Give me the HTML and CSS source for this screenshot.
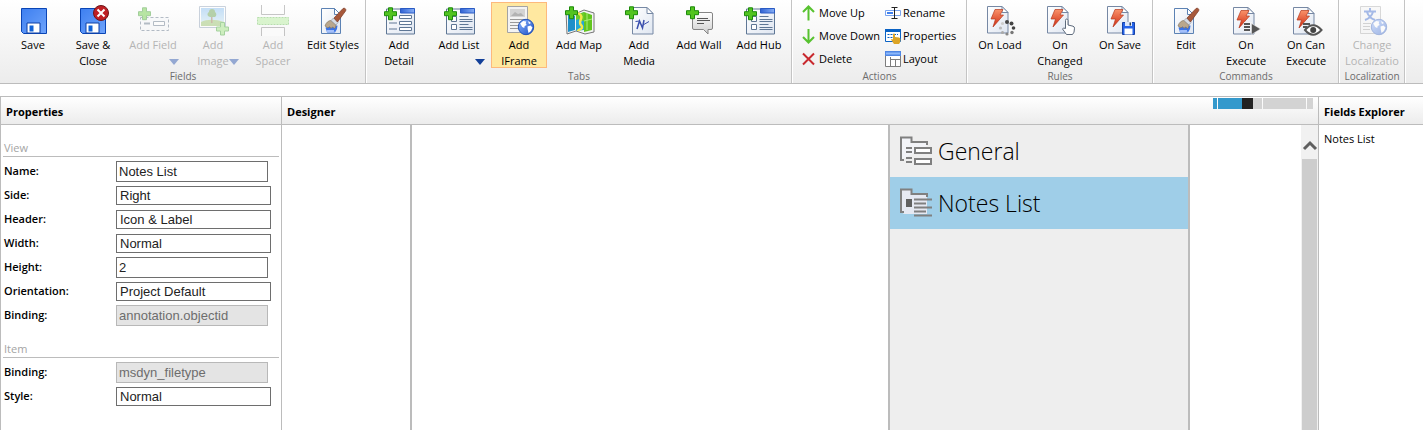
FILE: index.html
```html
<!DOCTYPE html>
<html lang="en">
<head>
<meta charset="utf-8">
<title>Form Designer</title>
<link rel="stylesheet" href="styles.css">
</head>
<body>
<svg class="defs" aria-hidden="true">
  <defs>
    <linearGradient id="g-disk" x1="0" y1="0" x2="1" y2="1"><stop offset="0" stop-color="#3d7ff0"/><stop offset="1" stop-color="#6fa4fb"/></linearGradient>
    <linearGradient id="g-page" x1="0" y1="0" x2="1" y2="1"><stop offset="0" stop-color="#ffffff"/><stop offset="1" stop-color="#dfe6f1"/></linearGradient>
    <linearGradient id="g-bar" x1="0" y1="0" x2="1" y2="0"><stop offset="0" stop-color="#2f62d4"/><stop offset="1" stop-color="#86aef5"/></linearGradient>
    <linearGradient id="g-bolt" x1="0" y1="0" x2="0" y2="1"><stop offset="0" stop-color="#f9926a"/><stop offset="1" stop-color="#cf2a12"/></linearGradient>
    <linearGradient id="g-globe" x1="0" y1="0" x2="1" y2="1"><stop offset="0" stop-color="#8ab4ff"/><stop offset="1" stop-color="#1c4fc4"/></linearGradient>
    <linearGradient id="g-grey" x1="0" y1="0" x2="0" y2="1"><stop offset="0" stop-color="#ffffff"/><stop offset="1" stop-color="#cfcfcf"/></linearGradient>
    <linearGradient id="g-sky" x1="0" y1="0" x2="0" y2="1"><stop offset="0" stop-color="#6fb0ec"/><stop offset="1" stop-color="#cdeaf6"/></linearGradient>
    <symbol id="plus" viewBox="0 0 14 14"><path d="M4.500.8h4v3.900h4v4h-4v4h-4v-4h-4v-4h4z" fill="#52c41f" stroke="#1d8a0c"/></symbol>
    <symbol id="disk" viewBox="0 0 28 28"><path d="M1.500 1.500h25v25h-23l-2-2z" fill="url(#g-disk)" stroke="#0a45b5"/><path d="M7 16h13v10H7z" fill="#fff" stroke="#0a3fa6" stroke-width="1"/><path d="M9.500 18.500h4v6h-4z" fill="#1062d6"/></symbol>
    <symbol id="sheet" viewBox="0 0 22 28"><path d="M.5.500h14.500l6 6v20.500H.5z" fill="url(#g-page)" stroke="#7688a4"/><path d="M15 .5v6h6z" fill="#fff" stroke="#7688a4"/></symbol>
    <symbol id="globe" viewBox="0 0 18 18"><circle cx="9" cy="9" r="7.700" fill="url(#g-globe)" stroke="#2353b8"/><path d="M3.200 5.500l3-2.500 3 .5-.5 2 1 1.500-2 1-.5 2-2-1zM10.500 8.500l3-1 2 2-1.500 3.500-2.500 2-.8-3.500zM11 3l3 2-2 1z" fill="#fff"/></symbol>
    <symbol id="boltdoc" viewBox="0 0 22 28"><use href="#sheet" width="22" height="28"/><path d="M8 3.500h8l-3 5.500h3.500L6 21l2.500-8H4z" fill="url(#g-bolt)" stroke="#b63a1e" stroke-width=".7"/></symbol>
    <symbol id="window" viewBox="0 0 30 27"><path d="M.5 1h28v25H.5z" fill="url(#g-page)" stroke="#5f7795"/><path d="M14.500.500h14v4.500h-14z" fill="url(#g-bar)" stroke="#2a5bc4"/></symbol>
    <symbol id="brushdoc" viewBox="0 0 32 32"><path d="M4.500 4.500h13l6 6v19h-19z" fill="url(#g-page)" stroke="#5c82b4"/><path d="M17.500 4.500v6h6z" fill="#fff" stroke="#5c82b4"/><path d="M8.500 23.500l12-2-.5 3.500-2 3.500H10z" fill="#3b74e8"/><path d="M10 26l1 2 1-2 1 2 1-2 1 2 1-2 1 2" fill="none" stroke="#bcd2ff"/><path d="M8 22c1-3.500 3.500-5.500 6-5.500l5 4.500c0 1.500-.5 2.500-1.500 3.500l-2-1.500-1.500 1.500-1.500-2-1.500 1.500z" fill="#b9a78d" stroke="#7b6b56" stroke-width=".6"/><path d="M14 16.500l2.500-2.500 4.500 4.500-2 2.500z" fill="#d7dce4" stroke="#8a8f99" stroke-width=".6"/><path d="M17 14L26 4.500c1.500-1 3.500.5 2.700 2.300L20.500 18z" fill="#a7583a" stroke="#783822" stroke-width=".7"/></symbol>
    <symbol id="listbody" viewBox="0 0 32 32"><use href="#window" x="3" y="4" width="30" height="27"/><path d="M8.500 12.500h5v5h-5zM8.500 20.500h5v5h-5z" fill="#fff" stroke="#5f7795"/><path d="M16.500 12.500h9M16.500 15.500h13M16.500 17.500h13M16.500 20.500h9M16.500 23.500h13M16.500 25.500h13" stroke="#5f7795"/><use href="#plus" x="1" y="3" width="14" height="14"/></symbol>
  </defs>
</svg>

<nav class="ribbon" aria-label="Ribbon">
  <section class="group">
    <div class="tools">
      <button class="tool"><svg class="ico" viewBox="0 0 32 32"><use href="#disk" x="3" y="3" width="28" height="28"/></svg><span class="cap">Save</span></button>
      <button class="tool"><svg class="ico" viewBox="0 0 32 32"><use href="#disk" x="2" y="3" width="28" height="28"/><circle cx="24" cy="9" r="7.500" fill="#bf1f24" stroke="#6e1518"/><path d="M20.500 5.500l7 7M27.500 5.500l-7 7" stroke="#fff" stroke-width="2"/></svg><span class="cap">Save &amp;<br>Close</span></button>
      <button class="tool" disabled><svg class="ico" viewBox="0 0 32 32"><path d="M3.500 13.500h28v13h-28z" fill="#f5f7fa" stroke="#4c6078" stroke-dasharray="3 2"/><path d="M7 19.500h6" stroke="#4c6078" stroke-width="2"/><path d="M16.500 17.500h11v4h-11z" fill="#fff" stroke="#4c6078" /><use href="#plus" x="1" y="3" width="14" height="14"/></svg><span class="cap">Add Field</span><i class="drop"></i></button>
      <button class="tool" disabled><svg class="ico" viewBox="0 0 32 32"><path d="M2.500 2.500h26v21h-26z" fill="#fff" stroke="#7f93ad"/><path d="M4 4h23v18H4z" fill="url(#g-sky)"/><path d="M4 18c6-3 14-3 23 0v4H4z" fill="#86b851"/><path d="M14 12h1.500v7H14z" fill="#8a5a33"/><path d="M11 12a3 3 0 0 1 1-4 3 3 0 0 1 6 0 3 3 0 0 1 0 5h-5z" fill="#4c8f2e"/><path d="M23.500 18.500h4v4.500h4v4h-4v4h-4v-4h-4v-4h4z" fill="#8ee06a" stroke="#2d9a1d"/></svg><span class="cap">Add<br>Image</span><i class="drop"></i></button>
      <button class="tool" disabled><svg class="ico" viewBox="0 0 32 32"><path d="M4.500 1v9.500h23V1M4.500 32v-8.500h23V32" fill="#fff" stroke="#777"/><path d="M.5 13.500h31v7H.5z" fill="#a8ec8c" stroke="#55b63e" stroke-dasharray="2 1"/></svg><span class="cap">Add<br>Spacer</span></button>
      <button class="tool"><svg class="ico" viewBox="0 0 32 32"><use href="#brushdoc" width="32" height="32"/></svg><span class="cap">Edit Styles</span></button>
    </div>
    <h2 class="group-name">Fields</h2>
  </section>

  <section class="group">
    <div class="tools">
      <button class="tool"><svg class="ico" viewBox="0 0 32 32"><use href="#window" x="3" y="4" width="30" height="27"/><path d="M16.500 11.500h12v3h-12zM16.500 17.500h12v3h-12zM16.500 23.500h12v3h-12z" fill="#fff" stroke="#5f7795"/><path d="M6 19h8M6 25h8" stroke="#5f7795"/><use href="#plus" x="1" y="3" width="14" height="14"/></svg><span class="cap">Add<br>Detail</span></button>
      <button class="tool"><svg class="ico" viewBox="0 0 32 32"><use href="#listbody" width="32" height="32"/></svg><span class="cap">Add List</span><i class="drop"></i></button>
      <button class="tool active"><svg class="ico" viewBox="0 0 32 32"><path d="M4.500 2.500h20v26h-20z" fill="#f3f3f3" stroke="#a3a3a3"/><path d="M7 5h15v8H7z" fill="#d3d3d3"/><path d="M8 12l4-4 3 2 3-1 3 3z" fill="#b2b2b2"/><path d="M7 15.500h15M7 18.500h11M7 21.500h8M7 24.500h8" stroke="#999"/><use href="#globe" x="14" y="14" width="18" height="18"/></svg><span class="cap">Add<br>IFrame</span></button>
      <button class="tool"><svg class="ico" viewBox="0 0 32 32"><path d="M3 7l9 3 9-4 10 3v19l-9 2-9-3-9 3z" fill="#f4f4f4" stroke="#777"/><path d="M5 9l7 3v14l-7 2z" fill="#1e8fc9"/><path d="M13 12l8-4v18l-8 1z" fill="#25a8d8"/><path d="M21 8l8 3v15l-8 2z" fill="#62c51f"/><path d="M13 11l8-3v9c-4 0-4-3-8-1z" fill="#6ccc2b"/><path d="M15 9c8 4-1 8 3 12s-3 4-3 6" fill="none" stroke="#f6e84a" stroke-width="2.500"/><path d="M21 17l8-2M24 9v17" stroke="#abed77"/><use href="#plus" x="2" y="2" width="14" height="14"/></svg><span class="cap">Add Map</span></button>
      <button class="tool"><svg class="ico" viewBox="0 0 32 32"><use href="#sheet" x="9" y="3" width="22" height="28"/><path d="M14 25l2.500-8 3 7 1.500-8" fill="none" stroke="#3c50ae" stroke-width="1.500"/><path d="M12.500 17.500l4-.5M20 21l6-3.500" fill="none" stroke="#3c50ae"/><use href="#plus" x="2" y="2" width="14" height="14"/></svg><span class="cap">Add<br>Media</span></button>
      <button class="tool"><svg class="ico" viewBox="0 0 32 32"><path d="M11 8.500h17q1.500 0 1.500 1.500v14q0 1.500-1.500 1.500h-3v4.500l-4.500-4.500H11q-1.500 0-1.500-1.500V10q0-1.500 1.500-1.500z" fill="url(#g-grey)" stroke="#858585"/><path d="M14 14.500h11M14 16.500h13M14 19.500h7" stroke="#555"/><use href="#plus" x="3" y="2" width="14" height="14"/></svg><span class="cap">Add Wall</span></button>
      <button class="tool"><svg class="ico" viewBox="0 0 32 32"><use href="#listbody" width="32" height="32"/></svg><span class="cap">Add Hub</span></button>
    </div>
    <h2 class="group-name">Tabs</h2>
  </section>

  <section class="group">
    <div class="actions">
      <button class="action"><svg class="mini" viewBox="0 0 16 16"><path d="M7.500 15.500V2M2 7l5.500-5.500L13 7" fill="none" stroke="#57c22f" stroke-width="2"/></svg><span>Move Up</span></button>
      <button class="action"><svg class="mini" viewBox="0 0 16 16"><path d="M7.500 1v13M2 9l5.500 5.500L13 9" fill="none" stroke="#57c22f" stroke-width="2"/></svg><span>Move Down</span></button>
      <button class="action"><svg class="mini" viewBox="0 0 16 16"><path d="M2 2.500l11 11M13 2.500l-11 11" stroke="#c8282e" stroke-width="2"/></svg><span>Delete</span></button>
      <button class="action"><svg class="mini" viewBox="0 0 16 16"><path d="M.5 5.500h15v5H.5z" fill="#fff" stroke="#7aa4ee"/><path d="M2 7h6v2H2z" fill="#3f80ee"/><path d="M6.500 2.500h6M9.500 2.500v11M6.500 13.500h6" stroke="#222" fill="none"/></svg><span>Rename</span></button>
      <button class="action"><svg class="mini" viewBox="0 0 16 16"><path d="M.5 1.500h15v12H.5z" fill="#fff" stroke="#0a62c4"/><path d="M0 1h16v3H0z" fill="#0a62c4"/><path d="M2.500 6.500h5M2.500 9.500h5M9 6.500h4" stroke="#0a62c4" stroke-dasharray="2 1"/><path d="M8 6.500q0-1 1-1t1 1v2.500l4 .5q1.500.5 1.500 2l-.5 3-1 1.500H9l-3-4.500q.5-1 2 0z" fill="#dca424"/></svg><span>Properties</span></button>
      <button class="action"><svg class="mini" viewBox="0 0 16 16"><path d="M.5.500h15v15H.5z" fill="#fff" stroke="#7d7d7d"/><path d="M0 0h16v5H0z" fill="#4f86e4"/><path d="M1 1.500h14v2H1z" fill="#8db8fa"/><path d="M5.500 6v9M6 8.500h9M10.500 9v6" stroke="#7d7d7d"/></svg><span>Layout</span></button>
    </div>
    <h2 class="group-name">Actions</h2>
  </section>

  <section class="group">
    <div class="tools">
      <button class="tool"><svg class="ico" viewBox="0 0 32 32"><use href="#boltdoc" x="3" y="2" width="22" height="28"/><g fill="#444"><circle cx="23" cy="18" r="2"/><circle cx="27.500" cy="19.500" r="2"/><circle cx="29.500" cy="24" r="1.800"/><circle cx="28" cy="28.500" r="1.700" fill="#777"/><circle cx="23" cy="30" r="1.600" fill="#888"/><circle cx="18.500" cy="28.500" r="1.600" fill="#aaa"/><circle cx="16.500" cy="24" r="1.600" fill="#bbb"/><circle cx="18.500" cy="19.500" r="1.600" fill="#ccc"/></g></svg><span class="cap">On Load</span></button>
      <button class="tool"><svg class="ico" viewBox="0 0 32 32"><use href="#boltdoc" x="3" y="2" width="22" height="28"/><path d="M21.500 24.500v-8q0-1.500 1.200-1.500t1.300 1.500v4.500l5 1.200q1.500.5 1.500 2l-.5 4-1.500 2.300h-6L18.500 25q.5-1.800 3-.5z" fill="#fff" stroke="#5e6b7c"/></svg><span class="cap">On<br>Changed</span></button>
      <button class="tool"><svg class="ico" viewBox="0 0 32 32"><use href="#boltdoc" x="3" y="2" width="22" height="28"/><path d="M18.500 18.500h12v12h-12z" fill="#2563e8" stroke="#1642a8"/><path d="M21 18h7v4h-7z" fill="#dce6fa"/><path d="M25.500 18.500h1.500v3h-1.500z" fill="#345"/><path d="M20.500 24.500h8v6h-8z" fill="#fff"/></svg><span class="cap">On Save</span></button>
    </div>
    <h2 class="group-name">Rules</h2>
  </section>

  <section class="group">
    <div class="tools">
      <button class="tool"><svg class="ico" viewBox="0 0 32 32"><use href="#brushdoc" width="32" height="32"/></svg><span class="cap">Edit</span></button>
      <button class="tool"><svg class="ico" viewBox="0 0 32 32"><use href="#boltdoc" x="3" y="3" width="22" height="28"/><path d="M14 18h8v10h-8z" fill="#f4f4f6" opacity=".8"/><path d="M14 20h6M14 23h6M14 26h6" stroke="#555" stroke-width="2"/><path d="M21.500 19.500l9 5.500-9 5.500z" fill="#555" stroke="#f4f4f6" stroke-width=".5"/></svg><span class="cap">On<br>Execute</span></button>
      <button class="tool"><svg class="ico" viewBox="0 0 32 32"><use href="#boltdoc" x="3" y="3" width="22" height="28"/><path d="M13 20h7M13 23h4" stroke="#555" stroke-width="2"/><path d="M15 26q8-9.500 16.500 0-8.500 9.500-16.500 0z" fill="#fff" stroke="#555" stroke-width="2"/><circle cx="23.200" cy="26" r="3" fill="#444"/></svg><span class="cap">On Can<br>Execute</span></button>
    </div>
    <h2 class="group-name">Commands</h2>
  </section>

  <section class="group">
    <div class="tools">
      <button class="tool" disabled><svg class="ico" viewBox="0 0 32 32"><path d="M4.500 2.500h20v27h-20z" fill="#f3f3f3" stroke="#a3a3a3"/><path d="M8 7.500h12M14 4v3M17 8q-2 6-8 8M11 8q2 6 8 8" fill="none" stroke="#2458c8" stroke-width="2"/><path d="M7 19.500h8M7 22.500h7M7 25.500h7" stroke="#999"/><use href="#globe" x="14" y="14" width="18" height="18"/></svg><span class="cap">Change<br>Localizatio</span></button>
    </div>
    <h2 class="group-name">Localization</h2>
  </section>
</nav>

<main class="workspace">
  <section class="pane">
    <h1 class="pane-title">Properties</h1>
    <form class="props">
      <h2 class="legend">View</h2>
      <div class="row"><label for="name">Name:</label><input id="name" value="Notes List"></div>
      <div class="row"><label for="side">Side:</label><select id="side"><option>Right</option></select></div>
      <div class="row"><label for="header">Header:</label><select id="header"><option>Icon &amp; Label</option></select></div>
      <div class="row"><label for="width">Width:</label><select id="width"><option>Normal</option></select></div>
      <div class="row"><label for="height">Height:</label><input id="height" value="2"></div>
      <div class="row"><label for="orientation">Orientation:</label><select id="orientation"><option>Project Default</option></select></div>
      <div class="row"><label for="binding">Binding:</label><input id="binding" value="annotation.objectid" disabled></div>
      <h2 class="legend">Item</h2>
      <div class="row"><label for="item-binding">Binding:</label><input id="item-binding" value="msdyn_filetype" disabled></div>
      <div class="row"><label for="style">Style:</label><select id="style"><option>Normal</option></select></div>
    </form>
  </section>

  <section class="pane">
    <div class="pane-title">
      <h1 class="title-text">Designer</h1>
      <div class="zoom" aria-hidden="true"><i class="z1"></i><i class="z2"></i><i class="z3"></i><i class="z4"></i><i class="z5"></i><i class="z6"></i></div>
    </div>
    <div class="stage">
      <div class="canvas">
        <div class="view"></div>
        <div class="tabs">
          <button class="tab"><svg class="tab-ico" viewBox="0 0 32 30"><path d="M1 24V2h11v4h15v4" fill="#f3f4f8"/><path d="M4 24H1V1.500h10.500V6H27v3" fill="none" stroke="#808080" stroke-width="2"/><path d="M6 12h6M6 16h6M6 22h6M6 26h6" stroke="#808080" stroke-width="2"/><path d="M15 12h16v5H15zM15 23h16v5H15z" fill="#fff" stroke="#808080" stroke-width="2"/></svg><span>General</span></button>
          <button class="tab selected"><svg class="tab-ico" viewBox="0 0 32 30"><path d="M1 24V2h11v4h15v20H4z" fill="#e6e9f2"/><path d="M4 24H1V1.500h10.500V6H27v3" fill="none" stroke="#808080" stroke-width="2"/><path d="M6 11h6v8H6z" fill="#606060"/><path d="M14 11.500h18M14 15.500h12M14 19.500h18M14 23.500h12M14 27.500h18" stroke="#808080" stroke-width="2"/></svg><span>Notes List</span></button>
        </div>
      </div>
      <div class="scrollbar"><svg class="chev" viewBox="0 0 12 9"><path d="M0 7L6 1l6 6" fill="none" stroke="#606060" stroke-width="3"/></svg><div class="thumb"></div></div>
    </div>
  </section>

  <section class="pane">
    <h1 class="pane-title">Fields Explorer</h1>
    <p class="node">Notes List</p>
  </section>
</main>
</body>
</html>
```
FILE: styles.css
```css
* { box-sizing: border-box; }
html, body { height: 100%; }
body {
  margin: 0;
  display: flex;
  flex-direction: column;
  background: #fff;
  color: #000;
  font: 11px/16px "Open Sans", "Noto Sans", sans-serif;
  overflow: hidden;
}
h1, h2, p { margin: 0; }
button { border: 0; padding: 0; background: none; color: inherit; font: inherit; }
.defs { position: absolute; width: 0; height: 0; }

/* ribbon */
.ribbon {
  flex: none;
  display: flex;
  padding-left: 1px;
  border-bottom: 1px solid #bcbcbc;
  background: linear-gradient(#fff, #ececec);
}
.group {
  display: flex;
  flex-direction: column;
  justify-content: space-between;
  height: 83px;
  padding: 2px 4px 0;
  border-right: 1px solid #c4c4c4;
  margin-right: 1px;
  box-shadow: 1px 0 #fff;
}
.tools { display: flex; gap: 4px; }
.tool {
  position: relative;
  display: flex;
  flex-direction: column;
  align-items: center;
  width: 56px;
  height: 66px;
  border: 1px solid transparent;
}
.tool.active { background: #ffe8a0; border-color: #fdb97c; }
.tool:disabled { color: #b4b4b4; }
.tool:disabled .ico { opacity: 0.4; }
.ico { width: 32px; height: 32px; margin-top: 1px; overflow: visible; flex: none; }
.cap { line-height: 16px; margin-top: 1px; text-align: center; white-space: nowrap; }
.drop {
  position: absolute;
  right: 1px;
  bottom: 2px;
  border: 5px solid transparent;
  border-top: 6px solid #123f98;
  border-bottom: 0;
}
.tool:disabled .drop { border-top-color: #94a8d2; }
.group-name { font-size: 10px; font-weight: 400; line-height: 13px; color: #6c6c6c; text-align: center; }

.actions {
  display: grid;
  grid-template: repeat(3, 23px) / 77px 77px;
  grid-auto-flow: column;
  column-gap: 7px;
  margin-top: -1px;
  padding-left: 4px;
}
.action { display: flex; align-items: center; gap: 2px; }
.mini { width: 16px; height: 16px; flex: none; }
.action span { white-space: nowrap; }

/* panes */
.workspace {
  flex: 1;
  min-height: 0;
  margin-top: 12px;
  display: grid;
  grid-template-columns: 281px 1fr 104px;
  border-top: 1px solid #bcbcbc;
  border-left: 1px solid #bcbcbc;
}
.pane { display: flex; flex-direction: column; min-width: 0; min-height: 0; border-right: 1px solid #bcbcbc; }
.pane:last-child { border-right: 0; }
.pane-title {
  flex: none;
  display: flex;
  justify-content: space-between;
  height: 28px;
  padding: 0 5px;
  border-bottom: 1px solid #bcbcbc;
  background: linear-gradient(#fff, #ececec);
  font-size: 11px;
  font-weight: 700;
  line-height: 29px;
  white-space: nowrap;
}
.title-text { font: inherit; }

/* property form */
.props { padding: 15px 2px 0; }
.legend { padding: 0 1px; border-bottom: 1px solid #bcbcbc; font-size: 11px; font-weight: 400; line-height: 16px; color: #a4a4a4; margin-bottom: 2px; }
.row + .legend { margin-top: 14px; }
.row { display: grid; grid-template-columns: 113px 1fr; align-items: center; height: 24px; }
.row label { padding-left: 1px; font-weight: 600; }
.row input, .row select {
  appearance: none;
  width: 152px;
  height: 21px;
  margin: 0;
  padding: 0 2px;
  border: 1px solid #6e6e6e;
  border-radius: 0;
  background: #fff;
  color: #222;
  font: 13px "Liberation Sans", Arial, sans-serif;
}
.row select { width: 155px; height: 19px; padding: 0 3px; }
.row input:disabled { background: #e4e4e4; border-color: #b8b8b8; color: #6d6d6d; }

/* designer */
.zoom { display: flex; width: 100px; height: 11px; margin-top: 1px; }
.zoom i { background: #d3d3d3; }
.z1, .z2, .z4, .z5 { margin-right: 1px; }
.zoom .z1 { width: 4px; background: #3499cc; }
.zoom .z2 { width: 24px; background: #3499cc; margin-right: 0; }
.zoom .z3 { width: 11px; background: #222; }
.zoom .z4 { width: 9px; }
.zoom .z5 { flex: 1; }
.zoom .z6 { width: 6px; }
.stage { flex: 1; min-height: 0; display: flex; padding-left: 128px; }
.canvas { flex: 1; display: flex; margin-right: 111px; border: solid #bcbcbc; border-width: 0 2px; }
.view { flex: 1; }
.tabs { width: 300px; border-left: 2px solid #bcbcbc; background: #eee; }
.tab { display: flex; align-items: center; gap: 6px; width: 100%; height: 52px; padding: 0 10px; font-size: 23px; font-weight: 300; line-height: 30px; }
.tab-ico { width: 32px; height: 30px; }
.tab.selected { background: #9fcee8; }
.scrollbar { width: 17px; display: flex; flex-direction: column; align-items: center; background: #f1f1f1; }
.chev { width: 12px; height: 9px; margin: 17px 0 8px; overflow: visible; flex: none; }
.thumb { flex: 1; width: 15px; background: #cdcdcd; }

.node { padding: 6px 5px; }
```
